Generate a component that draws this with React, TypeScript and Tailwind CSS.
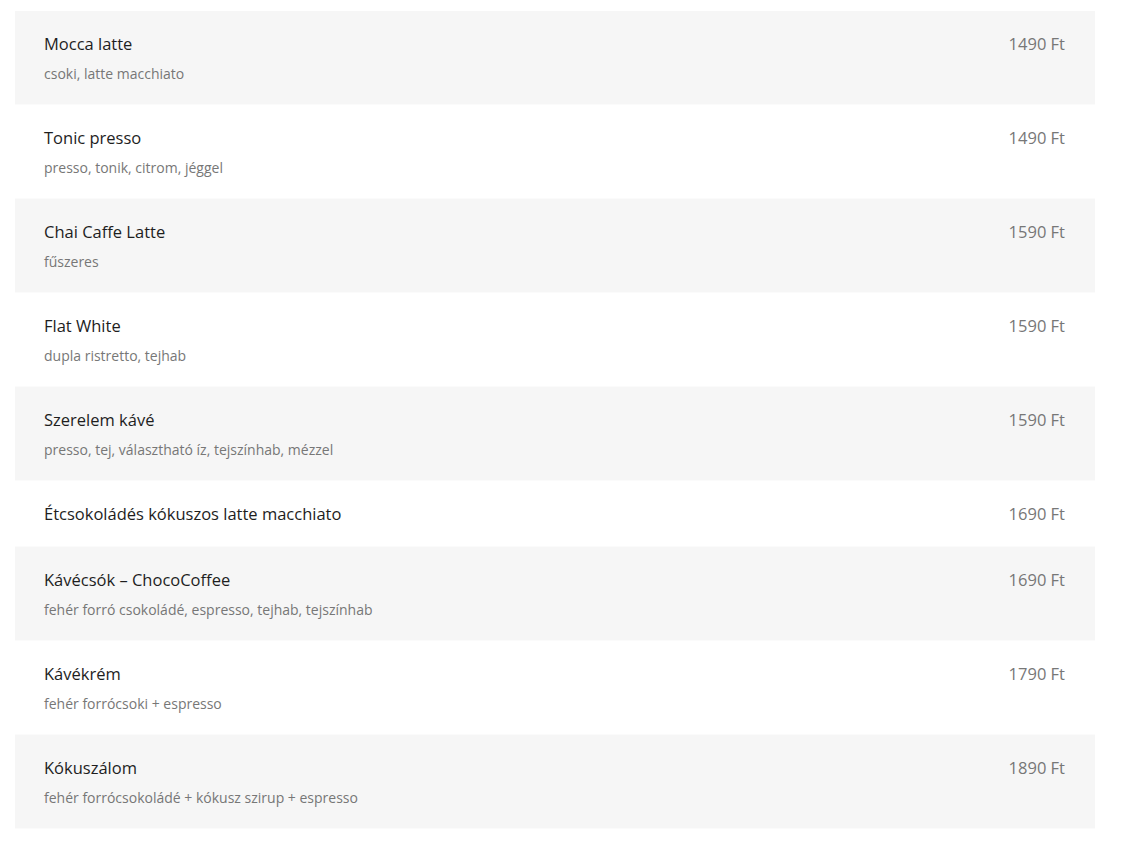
import React from "react";

type Item = { name: string; desc?: string; price: string };

const items: Item[] = [
  { name: "Mocca latte", desc: "csoki, latte macchiato", price: "1490 Ft" },
  { name: "Tonic presso", desc: "presso, tonik, citrom, jéggel", price: "1490 Ft" },
  { name: "Chai Caffe Latte", desc: "fűszeres", price: "1590 Ft" },
  { name: "Flat White", desc: "dupla ristretto, tejhab", price: "1590 Ft" },
  { name: "Szerelem kávé", desc: "presso, tej, választható íz, tejszínhab, mézzel", price: "1590 Ft" },
  { name: "Étcsokoládés kókuszos latte macchiato", price: "1690 Ft" },
  { name: "Kávécsók – ChocoCoffee", desc: "fehér forró csokoládé, espresso, tejhab, tejszínhab", price: "1690 Ft" },
  { name: "Kávékrém", desc: "fehér forrócsoki + espresso", price: "1790 Ft" },
  { name: "Kókuszálom", desc: "fehér forrócsokoládé + kókusz szirup + espresso", price: "1890 Ft" },
];

export default function App() {
  return (
    <div
      className="min-h-[849px] bg-white pt-[11px] pl-[15px]"
      style={{ fontFamily: "'Open Sans', 'Noto Sans', sans-serif" }}
    >
      <div className="w-[1080px] flex flex-col">
        {items.map((it, i) => (
          <div
            key={i}
            className={`flex justify-between pl-[29px] pr-[30px] pt-[21px] pb-[20px] border-b border-[#fbfbfb] ${
              i % 2 === 0 ? "bg-[#f6f6f6]" : "bg-white"
            }`}
          >
            <div className="flex flex-col">
              <div className="text-[16.5px] leading-[24px] text-[#1e1e1e]">{it.name}</div>
              {it.desc && (
                <div className="mt-[8px] text-[14px] leading-[20px] text-[#777]">{it.desc}</div>
              )}
            </div>
            <div className="text-[16.5px] leading-[24px] text-[#777]">{it.price}</div>
          </div>
        ))}
      </div>
    </div>
  );
}
